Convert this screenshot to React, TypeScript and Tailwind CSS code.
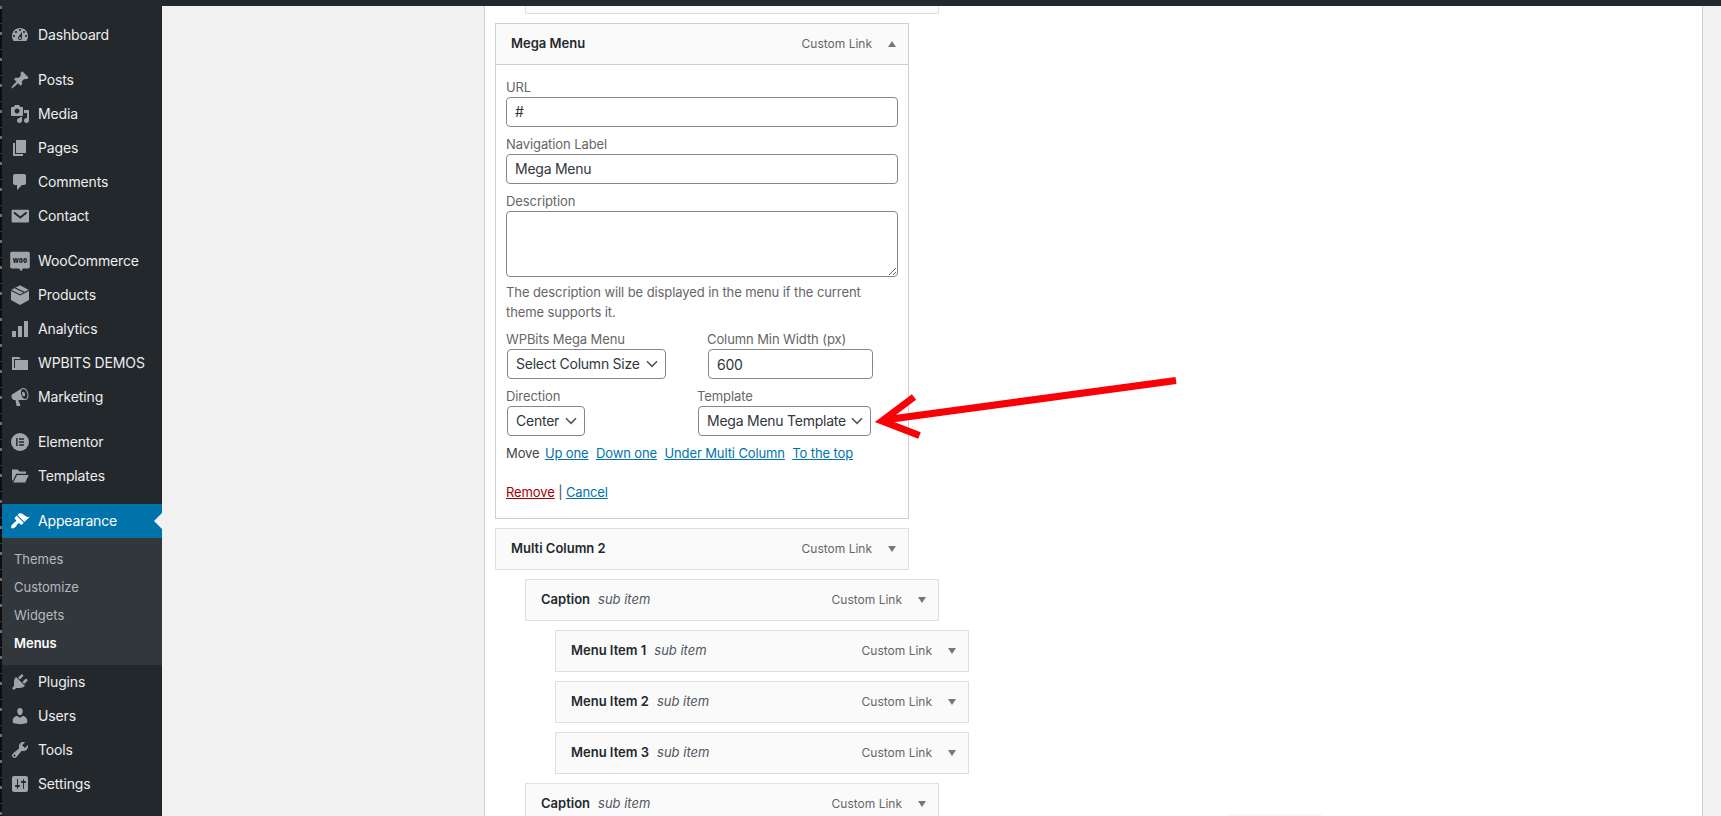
import type { ReactNode } from 'react'

interface NavItem {
  label: string
  icon: ReactNode
}

const path = (d: string) => <path fillRule="evenodd" d={d} />

const icons = {
  dashboard: path(
    'M3.76 16h12.48c1.1-1.37 1.76-3.11 1.76-5 0-4.42-3.58-8-8-8s-8 3.58-8 8c0 1.89.66 3.63 1.76 5zM10 4c.55 0 1 .45 1 1s-.45 1-1 1-1-.45-1-1 .45-1 1-1zM6 6c.55 0 1 .45 1 1s-.45 1-1 1-1-.45-1-1 .45-1 1-1zm8 0c.55 0 1 .45 1 1s-.45 1-1 1-1-.45-1-1 .45-1 1-1zm-5.37 5.55L12 7v6c0 1.1-.9 2-2 2s-2-.9-2-2c0-.57.24-1.08.63-1.45zM4 10c.55 0 1 .45 1 1s-.45 1-1 1-1-.45-1-1 .45-1 1-1zm12 0c.55 0 1 .45 1 1s-.45 1-1 1-1-.45-1-1 .45-1 1-1zm-5 3c0-.55-.45-1-1-1s-1 .45-1 1 .45 1 1 1 1-.45 1-1z',
  ),
  post: path(
    'M10.44 3.02l1.82-1.82 6.36 6.35-1.83 1.82c-1.05-.68-2.48-.57-3.41.36l-.75.75c-.92.93-1.04 2.35-.35 3.41l-1.83 1.82-2.41-2.41-2.8 2.79c-.42.42-3.38 2.71-3.8 2.29s1.86-3.39 2.28-3.81l2.79-2.79L4.1 9.36l1.83-1.82c1.05.69 2.48.57 3.4-.36l.75-.75c.93-.92 1.05-2.35.36-3.41z',
  ),
  media: path(
    'M13 11V4c0-.55-.45-1-1-1h-1.67L9 1H5L3.67 3H2c-.55 0-1 .45-1 1v7c0 .55.45 1 1 1h10c.55 0 1-.45 1-1zM7 4.5c1.38 0 2.5 1.12 2.5 2.5S8.38 9.5 7 9.5 4.5 8.38 4.5 7 5.62 4.5 7 4.5zM14 6h5v10.5c0 1.38-1.12 2.5-2.5 2.5S14 17.88 14 16.5s1.12-2.5 2.5-2.5c.17 0 .34.02.5.05V9h-3V6zm-4 8.05V13h2v3.5c0 1.38-1.12 2.5-2.5 2.5S7 17.88 7 16.5 8.12 14 9.5 14c.17 0 .34.02.5.05z',
  ),
  page: path('M6 15V2h10v13H6zm-1 1h8v2H3V5h2v11z'),
  comments: path('M5 2h9c1.1 0 2 .9 2 2v7c0 1.1-.9 2-2 2h-2l-5 5v-5H5c-1.1 0-2-.9-2-2V4c0-1.1.9-2 2-2z'),
  contact: (
    <>
      <rect x="1.6" y="3.8" width="17.4" height="12.6" rx="1" />
      <path d="M4 6.4l6.3 5.2 6.3-5.2" fill="none" stroke="#23282d" strokeWidth="1.9" />
    </>
  ),
  woo: (
    <>
      <path d="M1.8.8h16.4c1 0 1.6.7 1.6 1.6v13.4c0 1-.6 1.6-1.600 1.600h-5.400l-1.400 2.800-2.400-2.800H1.800C.8 17.400.2 16.800.2 15.800V2.400C.2 1.500.8.8 1.800.8z" />
      <text
        x="10"
        y="11.7"
        textAnchor="middle"
        fontSize="9.5"
        fontWeight="800"
        textLength="14.5"
        lengthAdjust="spacingAndGlyphs"
        className="fill-[#23282d] font-['Open_Sans',sans-serif]"
      >
        woo
      </text>
    </>
  ),
  products: (
    <>
      <path d="M10 .3l9 4.600v10.200l-9 4.800-9-4.800V4.900z" />
      <path d="M1 5.300l9 4.600 9-4.600M5.300 2.900l9.200 4.700" fill="none" stroke="#23282d" strokeWidth="1.100" />
    </>
  ),
  analytics: path('M18 18V2h-4v16h4zm-6 0V7H8v11h4zm-6 0v-6H2v6h4z'),
  category: path('M5 7h13v10H2V4h7l2 2H4v9h1V7z'),
  megaphone: path(
    'M18.15 5.94c.46 1.62.38 3.22-.02 4.48-.42 1.28-1.26 2.18-2.3 2.48-.16.06-.26.06-.4.06-.06.02-.12.02-.18.02-.06.02-.14.02-.22.02h-6.8l2.22 5.5c.02.14-.06.26-.14.34-.08.1-.24.16-.34.16H6.95c-.1 0-.26-.06-.34-.16-.08-.08-.16-.2-.14-.34l-1-5.5H4.25l-.02-.02c-.5.06-1.08-.18-1.54-.62s-.88-1.08-1.06-1.88c-.24-.8-.2-1.56-.02-2.2.18-.62.58-1.08 1.06-1.3l.02-.02 9-5.4c.1-.06.18-.1.24-.16.06-.04.14-.08.24-.12.16-.08.28-.12.5-.18 1.04-.3 2.24.1 3.22.98s1.84 2.24 2.26 3.86zm-2.58 5.98h-.02c.4-.1.74-.34 1.04-.7.58-.7.86-1.76.86-3.04 0-.64-.1-1.3-.28-1.98-.34-1.36-1.02-2.5-1.78-3.24s-1.68-1.1-2.46-.88c-.82.22-1.4.96-1.7 2-.32 1.04-.28 2.36.06 3.72.38 1.36 1 2.5 1.8 3.24.78.74 1.62 1.1 2.48.88zm-2.54-7.08c.22-.04.42-.02.62.04.38.16.76.48 1.02 1s.42 1.2.42 1.78c0 .3-.04.56-.12.8-.18.48-.44.84-.86.94-.34.1-.8-.06-1.14-.4s-.64-.86-.78-1.5c-.18-.62-.12-1.24.02-1.72s.48-.84.82-.94z',
  ),
  elementor: (
    <>
      <circle cx="10" cy="10" r="9" />
      <path d="M6.900 6v8M9 6.900h5M9 10h5M9 13.100h5" fill="none" stroke="#23282d" strokeWidth="1.500" />
    </>
  ),
  templates: path('M2 3.500h5.500l2 2H16v2.300H6.200L3 14.500H2zM7 9h11.700l-3.400 7.500H3.300z'),
  appearance: path(
    'M14.48 11.06L7.41 3.99l1.5-1.5c.5-.56 2.3-.47 3.51.32 1.21.8 1.43 1.28 2.91 2.1 1.18.64 2.45 1.26 4.45.85zm-.71.71L6.7 4.7 4.93 6.47c-.39.39-.39 1.02 0 1.41l1.06 1.06c.39.39.39 1.03 0 1.42-.6.6-1.43 1.11-2.21 1.69-.35.26-.7.53-1.01.84C1.43 14.23.4 16.08 1.4 17.07c.99 1 2.84-.03 4.18-1.36.31-.31.58-.66.85-1.02.57-.78 1.08-1.61 1.69-2.21.39-.39 1.02-.39 1.41 0l1.06 1.06c.39.39 1.02.39 1.41 0z',
  ),
  plugins: path(
    'M13.11 4.36L9.87 7.6 8 5.73l3.24-3.24c.35-.34 1.05-.2 1.56.32.52.51.66 1.21.31 1.55zm-8 1.77l.91-1.12 9.01 9.01-1.19.84c-.71.71-2.63 1.16-3.82 1.16H6.14L4.9 17.26c-.59.59-1.54.59-2.12 0-.59-.58-.59-1.53 0-2.12l1.24-1.24v-3.88c0-1.13.4-3.19 1.09-3.89zm7.26 3.97l3.24-3.24c.34-.35 1.04-.21 1.55.31.52.51.66 1.21.31 1.55l-3.24 3.25z',
  ),
  users: path(
    'M10 9.25c-2.27 0-2.73-3.44-2.73-3.44C7 4.02 7.82 2 9.97 2c2.16 0 2.98 2.02 2.71 3.81 0 0-.41 3.44-2.68 3.44zm0 2.57L12.72 10c2.39 0 4.52 2.33 4.52 4.53v2.49s-3.65 1.13-7.24 1.13c-3.65 0-7.24-1.13-7.24-1.13v-2.49c0-2.25 1.94-4.48 4.47-4.48z',
  ),
  tools: path(
    'M16.68 9.77c-1.34 1.34-3.3 1.67-4.95.99l-5.41 6.52c-.99.99-2.59.99-3.58 0s-.99-2.59 0-3.57l6.52-5.42c-.68-1.65-.35-3.61.99-4.95 1.28-1.28 3.12-1.62 4.72-1.06l-2.89 2.89 2.82 2.82 2.86-2.87c.53 1.58.18 3.39-1.08 4.65zM3.81 16.21c.4.39 1.04.39 1.43 0 .4-.4.4-1.04 0-1.43-.39-.4-1.03-.4-1.43 0-.39.39-.39 1.03 0 1.43z',
  ),
  settings: path(
    'M18 16V4c0-1.1-.9-2-2-2H4c-1.1 0-2 .9-2 2v12c0 1.1.9 2 2 2h12c1.1 0 2-.9 2-2zM8 11h1c.55 0 1 .45 1 1s-.45 1-1 1H8v1.5c0 .28-.22.5-.5.5s-.5-.22-.5-.5V13H6c-.55 0-1-.45-1-1s.45-1 1-1h1V5.5c0-.28.22-.5.5-.5s.5.22.5.5V11zm5-2h-1c-.55 0-1-.45-1-1s.45-1 1-1h1V5.5c0-.28.22-.5.5-.5s.5.22.5.5V7h1c.55 0 1 .45 1 1s-.45 1-1 1h-1v5.5c0 .28-.22.5-.5.5s-.5-.22-.5-.5V9z',
  ),
}

const topGroups: NavItem[][] = [
  [{ label: 'Dashboard', icon: icons.dashboard }],
  [
    { label: 'Posts', icon: icons.post },
    { label: 'Media', icon: icons.media },
    { label: 'Pages', icon: icons.page },
    { label: 'Comments', icon: icons.comments },
    { label: 'Contact', icon: icons.contact },
  ],
  [
    { label: 'WooCommerce', icon: icons.woo },
    { label: 'Products', icon: icons.products },
    { label: 'Analytics', icon: icons.analytics },
    { label: 'WPBITS DEMOS', icon: icons.category },
    { label: 'Marketing', icon: icons.megaphone },
  ],
  [
    { label: 'Elementor', icon: icons.elementor },
    { label: 'Templates', icon: icons.templates },
  ],
]

const bottomGroup: NavItem[] = [
  { label: 'Plugins', icon: icons.plugins },
  { label: 'Users', icon: icons.users },
  { label: 'Tools', icon: icons.tools },
  { label: 'Settings', icon: icons.settings },
]

function SidebarItem({ label, icon, active = false }: NavItem & { active?: boolean }) {
  return (
    <a
      className={
        active
          ? 'relative flex h-[34px] items-center bg-[#0073aa] pl-[8.4px] text-white'
          : 'flex h-[34px] items-center pl-[8.4px] text-[#eeeeee]'
      }
    >
      <svg
        viewBox="0 0 20 20"
        className={active ? 'size-5 overflow-visible fill-white' : 'size-5 overflow-visible fill-[#a0a5aa]'}
      >
        {icon}
      </svg>
      <span className="pl-[7.6px] text-sm tracking-[-0.14px]">{label}</span>
      {active && (
        <span className="absolute top-[9px] right-0 border-y-8 border-r-8 border-y-transparent border-r-[#f1f1f1]" />
      )}
    </a>
  )
}

function Sidebar() {
  return (
    <aside className="flex w-[162px] shrink-0">
      <div className="w-[2px] bg-[repeating-linear-gradient(to_bottom,#6b6e72_0,#6b6e72_3px,#0c0e11_3px,#0c0e11_17px,#34373b_17px,#34373b_18px,#0c0e11_18px,#0c0e11_26px)]" />
      <nav className="w-40 bg-[#23282d] pt-3">
        <div className="flex flex-col gap-[11px]">
          {topGroups.map((group) => (
            <div key={group[0].label}>
              {group.map((item) => (
                <SidebarItem key={item.label} {...item} />
              ))}
            </div>
          ))}
          <div>
            <SidebarItem label="Appearance" icon={icons.appearance} active />
            <div className="flex h-[127px] flex-col bg-[#32373c] pt-[7px] pl-3 text-[13px] leading-7 tracking-[-0.02px] text-[#b4b9be]">
              <a>Themes</a>
              <a>Customize</a>
              <a>Widgets</a>
              <a className="font-semibold text-white">Menus</a>
            </div>
            {bottomGroup.map((item) => (
              <SidebarItem key={item.label} {...item} />
            ))}
          </div>
        </div>
      </nav>
    </aside>
  )
}

interface MenuBarProps {
  title: string
  sub?: boolean
  open?: boolean
}

function MenuBar({ title, sub = false, open = false }: MenuBarProps) {
  return (
    <div
      className={
        open
          ? 'flex h-[42px] w-[414px] items-center border border-[#ccd0d4] bg-[#fafafa] pr-3 pl-[15px]'
          : 'flex h-[42px] w-[414px] items-center border border-[#dddfe1] bg-[#fafafa] pr-3 pl-[15px]'
      }
    >
      <span className="text-[13px] font-semibold text-[#23282d]">{title}</span>
      {sub && <span className="pl-2 text-[13px] text-[#50575e] italic">sub item</span>}
      <span className="ml-auto text-xs text-[#666666]">Custom Link</span>
      <svg viewBox="0 0 8 6" className="ml-4 h-[6px] w-2 shrink-0 fill-[#72777c]">
        <path d={open ? 'M4 0l4 6H0z' : 'M0 0h8L4 6z'} />
      </svg>
    </div>
  )
}

function Select({ value, className }: { value: string; className: string }) {
  return (
    <div
      className={`flex h-[30px] items-center justify-between rounded border border-[#83888d] bg-white pr-[7px] pl-2 text-sm tracking-[-0.24px] whitespace-nowrap text-[#32373c] ${className}`}
    >
      <span>{value}</span>
      <svg viewBox="0 0 12 8" className="h-2 w-3 shrink-0 fill-none stroke-[#555555] stroke-[1.6]">
        <path d="M1 1.300L6 6.300l5-5" />
      </svg>
    </div>
  )
}

const label = 'block h-[18px] text-[13px] leading-4 text-[#666666]'
const rowLabel = 'block h-[18px] text-[13px] leading-[18px] text-[#666666]'
const input =
  'block h-[30px] w-full rounded border border-[#83888d] bg-white px-2 text-sm tracking-[-0.25px] text-[#32373c]'
const link = 'text-[#0073aa] underline'

function MegaMenuSettings() {
  return (
    <div className="h-[454px] w-[414px] border border-t-0 border-[#ccd0d4] bg-white px-2.5 pt-[14px] text-[13px] tracking-[-0.09px]">
      <label className={label}>URL</label>
      <input className={`pb-[2px] ${input}`} defaultValue="#" />
      <label className={`mt-[9px] ${label}`}>Navigation Label</label>
      <input className={`pb-[2px] ${input}`} defaultValue="Mega Menu" />
      <label className={`mt-[9px] ${label}`}>Description</label>
      <textarea className="block h-[66px] w-full resize rounded border border-[#83888d] bg-white" />
      <p className="mt-[5px] leading-5 text-[#666666]">
        The description will be displayed in the menu if the current
        <br />
        theme supports it.
      </p>
      <div className="mt-2 flex">
        <div className="w-[201px]">
          <span className={rowLabel}>WPBits Mega Menu</span>
          <Select value="Select Column Size" className="mt-px ml-px w-[159px]" />
        </div>
        <div className="w-[165px]">
          <span className={rowLabel}>Column Min Width (px)</span>
          <input className={`mt-px ml-px ${input}`} defaultValue="600" />
        </div>
      </div>
      <div className="mt-2 flex">
        <div className="w-[192px]">
          <span className={rowLabel}>Direction</span>
          <Select value="Center" className="mt-px ml-px w-[78px]" />
        </div>
        <div>
          <span className={`-ml-px ${rowLabel}`}>Template</span>
          <Select value="Mega Menu Template" className="mt-px w-[173px]" />
        </div>
      </div>
      <div className="mt-2 flex gap-[7.4px] leading-[19px] tracking-[-0.11px] text-[#444444]">
        <span className="-mr-[2px]">Move</span>
        <a className={link}>Up one</a>
        <a className={link}>Down one</a>
        <a className={link}>Under Multi Column</a>
        <a className={link}>To the top</a>
      </div>
      <div className="mt-5 flex gap-[3.5px] leading-[19px] tracking-[-0.11px] text-[#444444]">
        <a className="text-[#a00000] underline">Remove</a>
        <span>|</span>
        <a className={link}>Cancel</a>
      </div>
    </div>
  )
}

function PointerArrow() {
  return (
    <svg
      viewBox="0 0 310 70"
      className="absolute top-[376px] left-[872px] h-[70px] w-[310px] fill-none stroke-[#fb0007] stroke-[7]"
    >
      <path d="M304 4.500L12 44M42 21L10 45l37.500 14.500" />
    </svg>
  )
}

export default function App() {
  return (
    <div className="relative flex h-[816px] w-[1721px] flex-col overflow-hidden bg-[#f1f1f1] font-[Inter,sans-serif]">
      <div className="h-[6px] shrink-0 bg-[#23282d]" />
      <div className="flex h-[810px]">
        <Sidebar />
        <main className="ml-[322px] h-[810px] w-[1219px] overflow-hidden border-x border-[#ccd0d4] bg-white pl-2.5">
          <div className="ml-[30px] h-2 w-[414px] border border-t-0 border-[#dddfe1] bg-[#fafafa]" />
          <div className="mt-[9px] flex flex-col gap-[9px]">
            <div>
              <MenuBar title="Mega Menu" open />
              <MegaMenuSettings />
            </div>
            <MenuBar title="Multi Column 2" />
            <div className="ml-[30px] flex flex-col gap-[9px]">
              <MenuBar title="Caption" sub />
              <div className="ml-[30px] flex flex-col gap-[9px]">
                <MenuBar title="Menu Item 1" sub />
                <MenuBar title="Menu Item 2" sub />
                <MenuBar title="Menu Item 3" sub />
              </div>
              <MenuBar title="Caption" sub />
            </div>
          </div>
        </main>
      </div>
      <PointerArrow />
      <div className="absolute bottom-0 left-[1228px] h-[2px] w-[94px] bg-[#f8f8f8]" />
    </div>
  )
}
